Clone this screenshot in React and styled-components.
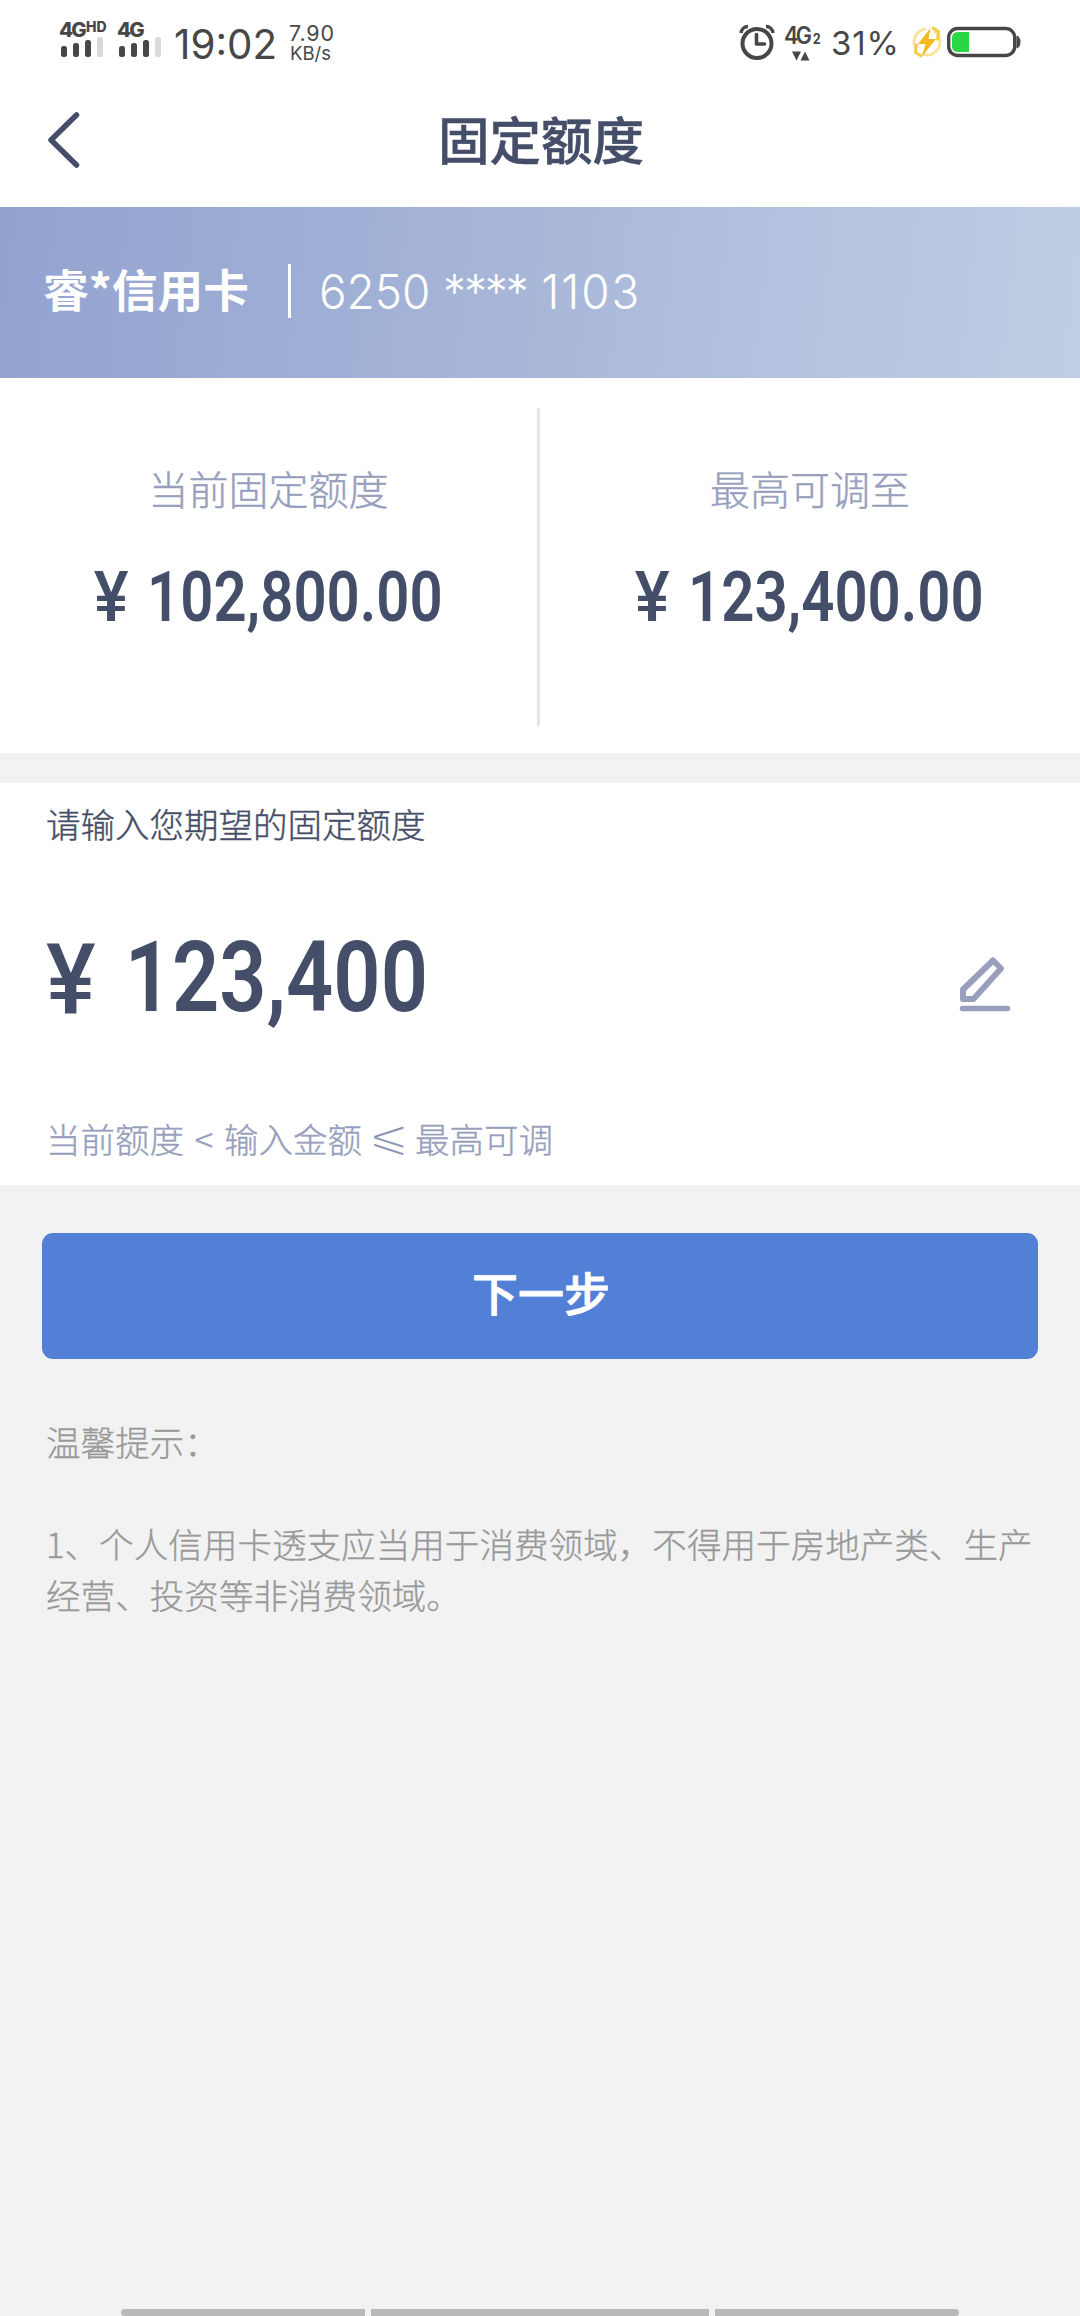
import React from "react";
import styled, { createGlobalStyle } from "styled-components";

const INK = "#454e68";
const MUTED = "#989fbd";
const STATUS = "#474747";
const CJK = `"Noto Sans CJK SC", sans-serif`;

const GlobalStyle = createGlobalStyle`
  *, *::before, *::after { box-sizing: border-box; }
  body { margin: 0; background: #f2f2f2; }
`;

const Screen = styled.div`
  width: 1080px;
  height: 2316px;
  display: flex;
  flex-direction: column;
  background: #f2f2f2;
  font-family: ${CJK};
  color: ${INK};
  overflow: hidden;
  white-space: nowrap;
`;

const StatusBar = styled.div`
  height: 84px;
  display: flex;
  justify-content: space-between;
  padding: 0 58px 0 59px;
  background: #fff;
  color: ${STATUS};
  font-family: Inter, sans-serif;
`;

const StatusGroup = styled.div`
  display: flex;
  align-items: flex-start;
`;

const Signal = styled.div`
  width: 58px;
  padding-top: 20px;
  display: flex;
  flex-direction: column;
`;

const Network = styled.div`
  display: flex;
  height: 17px;
  font-size: 20.5px;
  line-height: 19px;
  font-weight: 800;
  letter-spacing: -1.8px;
  sup {
    margin-left: 1px;
    font-size: 14px;
    line-height: 13px;
    letter-spacing: 0;
  }
`;

const Bars = styled.div`
  display: flex;
  align-items: flex-end;
  gap: 6px;
  height: 20px;
  padding-left: 2px;
`;

const Bar = styled.i`
  width: 6px;
  height: ${(p) => p.$h}px;
  border-radius: 2.5px;
  background: ${(p) => (p.$off ? "#dadada" : STATUS)};
`;

const Clock = styled.div`
  width: 113px;
  margin-left: -1px;
  padding-top: 20px;
  font-size: 40.3px;
  line-height: 49px;
`;

const Speed = styled.div`
  padding: 23px 0 0 2px;
  font-size: 21.5px;
  line-height: 20px;
  letter-spacing: 0.9px;
  div + div { font-size: 18.5px; letter-spacing: 0; line-height: 20px; padding-left: 1px; }
`;

const DataNet = styled.div`
  margin-left: 9px;
  width: 47px;
  padding-top: 24px;
  font-size: 24px;
  line-height: 24px;
  font-weight: 600;
  display: flex;
  flex-direction: column;
  span { letter-spacing: -3px; transform: scaleX(0.9); transform-origin: left; }
  small { font-size: 14px; font-weight: 700; margin-left: 4px; }
`;

const Percent = styled.div`
  width: 80px;
  padding-top: 23px;
  font-size: 33px;
  line-height: 40px;
  letter-spacing: 0.9px;
`;

const StatusIcon = styled.svg`
  display: block;
  flex: none;
  margin-top: 22px;
`;

const NavBar = styled.div`
  height: 123px;
  padding: 0 45px 16px 47px;
  display: grid;
  grid-template-columns: 60px 1fr 60px;
  align-items: center;
  background: #fff;
`;

const Title = styled.h1`
  margin: 0;
  text-align: center;
  font-size: 51.5px;
  line-height: 72px;
  font-weight: 500;
  -webkit-text-stroke: 0.5px ${INK};
`;

const BackIcon = styled.svg`
  display: block;
  margin: 5px 0 0 -1px;
`;

const CardBanner = styled.div`
  height: 171px;
  padding: 0 43px 3px;
  display: flex;
  align-items: center;
  color: #fff;
  background: linear-gradient(97deg, #93a3d0 0%, #a1b0d5 35%, #b0bfdd 65%, #c1cde4 100%);
`;

const CardName = styled.div`
  width: 245px;
  font-size: 45.7px;
  line-height: 60px;
  margin-top: -7px;
  font-weight: 700;
`;

const BannerRule = styled.div`
  width: 3px;
  height: 54px;
  background: #fff;
`;

const CardNumber = styled.div`
  margin: 2px 0 0 28px;
  font-family: Inter, sans-serif;
  font-weight: 300;
  font-size: 48px;
  line-height: 60px;
  transform: scaleX(0.955);
  transform-origin: left;
`;

const Digits = styled.span`
  letter-spacing: ${(p) => p.$track}px;
`;

const Limits = styled.div`
  height: 375px;
  padding: 30px 0 27px;
  display: grid;
  grid-template-columns: 537px 3px 540px;
  background: #fff;
`;

const LimitsRule = styled.div`
  background: #e6e6e6;
`;

const Limit = styled.div`
  display: flex;
  flex-direction: column;
  align-items: center;
  gap: 39px;
  padding-top: 51px;
`;

const LimitLabel = styled.div`
  font-size: 40px;
  line-height: 58px;
  font-weight: 300;
  color: ${MUTED};
  -webkit-text-stroke: 0.4px ${MUTED};
`;

const Amount = styled.div`
  display: flex;
  justify-content: ${(p) => (p.$large ? "flex-start" : "center")};
  margin-right: ${(p) => (p.$large ? 0 : 1)}px;
  font-family: Roboto, sans-serif;
  font-weight: 600;
  font-size: ${(p) => (p.$large ? 98 : 70)}px;
  line-height: ${(p) => (p.$large ? 116 : 82)}px;
  transform: scaleX(${(p) => (p.$large ? 0.845 : 0.83)});
  transform-origin: ${(p) => (p.$large ? "left" : "center")};
`;

const Yen = styled.span`
  font-weight: 500;
  padding-top: ${(p) => p.$drop || 0}px;
  margin-right: ${(p) => p.$gap}px;
  transform: scaleX(1.13);
  transform-origin: left;
`;

const Gap = styled.div`
  height: 30px;
`;

const Entry = styled.div`
  height: 402px;
  padding: 0 46px;
  display: flex;
  flex-direction: column;
  background: #fff;
`;

const EntryLabel = styled.div`
  padding-top: 15px;
  font-size: 34.5px;
  line-height: 50px;
  font-weight: 300;
  -webkit-text-stroke: 0.4px ${INK};
`;

const EntryRow = styled.div`
  margin-top: 73px;
  height: 116px;
  padding-right: 21px;
  display: flex;
  align-items: center;
  justify-content: space-between;
`;

const PencilIcon = styled.svg`
  display: block;
  margin-top: 8px;
`;

const Hint = styled.div`
  margin-top: 76px;
  display: flex;
  font-size: 34.5px;
  line-height: 50px;
  font-weight: 300;
  color: ${MUTED};
  -webkit-text-stroke: 0.4px ${MUTED};
`;

const Sign = styled.span`
  width: ${(p) => p.$w}px;
  text-align: center;
`;

const ThinSign = styled(Sign)`
  font-family: "DejaVu Sans", sans-serif;
  font-size: 44px;
  line-height: 45px;
  color: #8d95b6;
  -webkit-text-stroke: 1.4px #fff;
  transform: scaleX(1.12);
`;

const Actions = styled.div`
  padding: 48px 42px 0;
`;

const NextButton = styled.button`
  display: block;
  width: 100%;
  height: 126px;
  padding: 0 0 10px 2px;
  border: 0;
  border-radius: 11px;
  background: #5380d7;
  color: #fff;
  font: 500 46px/60px ${CJK};
  -webkit-text-stroke: 0.8px #fff;
`;

const Tips = styled.div`
  padding: 57px 44px 0 46px;
  font-size: 34.6px;
  line-height: 51px;
  font-weight: 300;
  color: #999;
  -webkit-text-stroke: 0.3px #999;
`;

const Tip = styled.p`
  margin: 0;
  & + & { margin-top: 51px; }
`;

const GestureBars = styled.div`
  margin-top: auto;
  display: flex;
  justify-content: center;
  gap: 6px;
`;

const GestureBar = styled.div`
  width: ${(p) => p.$w}px;
  height: 7px;
  background: #b9b9b9;
  border-radius: ${(p) => p.$r || 0};
`;

function SignalMeter({ hd }) {
  return (
    <Signal>
      <Network>4G{hd && <sup>HD</sup>}</Network>
      <Bars>
        <Bar $h={11} />
        <Bar $h={14} />
        <Bar $h={17} />
        <Bar $h={20} $off />
      </Bars>
    </Signal>
  );
}

export default function App() {
  return (
    <Screen>
      <GlobalStyle />
      <StatusBar>
        <StatusGroup>
          <SignalMeter hd />
          <SignalMeter />
          <Clock>19:02</Clock>
          <Speed>
            <div>7.90</div>
            <div>KB/s</div>
          </Speed>
        </StatusGroup>
        <StatusGroup>
          <StatusIcon width="36" height="40" viewBox="0 0 36 40" fill="none" stroke={STATUS}>
            <circle cx="18" cy="21.5" r="14.5" strokeWidth="4" />
            <path d="M17.5 12.5v9.5h8" strokeWidth="3.6" strokeLinejoin="round" strokeLinecap="round" />
            <path d="M2 11C2.500 7 5.500 4.500 9 4.500M34 11C33.500 7 30.500 4.500 27 4.500" strokeWidth="3.400" />
          </StatusIcon>
          <DataNet>
            <span>4G<small>2</small></span>
            <svg width="36" height="10" viewBox="0 0 36 10">
              <path d="M8 .5h9L12.500 9.500zM16.500 9.500h9L21 .5z" fill={STATUS} />
            </svg>
          </DataNet>
          <Percent>31%</Percent>
          <StatusIcon width="36" height="40" viewBox="0 0 32 40" preserveAspectRatio="xMinYMid">
            <circle cx="16" cy="20" r="13" fill="none" stroke="#f9e3a0" strokeWidth="3" strokeDasharray="26 8" />
            <path d="M21 5.500l6.500 4-1 9M11 34.500l-6.500-4 1-9" fill="none" stroke="#f5cb4a" strokeWidth="3" />
            <path d="M19.500 6L7 22h7.500l-3.500 12.500L25 17h-7.500z" fill="#f5b820" />
          </StatusIcon>
          <StatusIcon width="75" height="40" viewBox="0 0 75 40">
            <rect x="1.700" y="6.500" width="66" height="27" rx="9" fill="none" stroke={STATUS} strokeWidth="3.400" />
            <path d="M70 14c4 1 4 11 0 12z" fill={STATUS} stroke={STATUS} />
            <path d="M11 10h11v20H11q-6 0-6-6v-8q0-6 6-6z" fill="#27d745" />
          </StatusIcon>
        </StatusGroup>
      </StatusBar>

      <NavBar>
        <BackIcon width="34" height="60" viewBox="0 0 34 60" fill="none" stroke={INK} strokeWidth="5.500" strokeLinecap="round" strokeLinejoin="round">
          <path d="M30.500 5L5 30l25.500 25" />
        </BackIcon>
        <Title>固定额度</Title>
      </NavBar>

      <CardBanner>
        <CardName>睿*信用卡</CardName>
        <BannerRule />
        <CardNumber>
          <Digits $track={0}>6250 </Digits>
          <Digits $track={-2.2}>****</Digits>
          <Digits $track={2}> 1103</Digits>
        </CardNumber>
      </CardBanner>

      <Limits>
        <Limit>
          <LimitLabel>当前固定额度</LimitLabel>
          <Amount><Yen $gap={27}>¥</Yen>102,800.00</Amount>
        </Limit>
        <LimitsRule />
        <Limit>
          <LimitLabel>最高可调至</LimitLabel>
          <Amount><Yen $gap={27}>¥</Yen>123,400.00</Amount>
        </Limit>
      </Limits>

      <Gap />

      <Entry>
        <EntryLabel>请输入您期望的固定额度</EntryLabel>
        <EntryRow>
          <Amount $large><Yen $gap={41} $drop={2}>¥</Yen>123,400</Amount>
          <PencilIcon width="56" height="58" viewBox="0 0 56 58" fill="none" stroke={MUTED} strokeWidth="6" strokeLinejoin="round" strokeLinecap="round">
            <path d="M6 45V35.500L36 6.500l8 8L16.500 45z" />
            <path d="M5.500 54.500h45" strokeWidth="5.500" />
          </PencilIcon>
        </EntryRow>
        <Hint>
          当前额度<Sign $w={40}>&lt;</Sign>输入金额<ThinSign $w={53}>⩽</ThinSign>最高可调
        </Hint>
      </Entry>

      <Actions>
        <NextButton>下一步</NextButton>
      </Actions>

      <Tips>
        <Tip>温馨提示：</Tip>
        <Tip>
          1、个人信用卡透支应当用于消费领域，不得用于房地产类、生产
          <br />
          经营、投资等非消费领域。
        </Tip>
      </Tips>

      <GestureBars>
        <GestureBar $w={244} $r="4px 0 0 4px" />
        <GestureBar $w={338} />
        <GestureBar $w={244} $r="0 4px 4px 0" />
      </GestureBars>
    </Screen>
  );
}
